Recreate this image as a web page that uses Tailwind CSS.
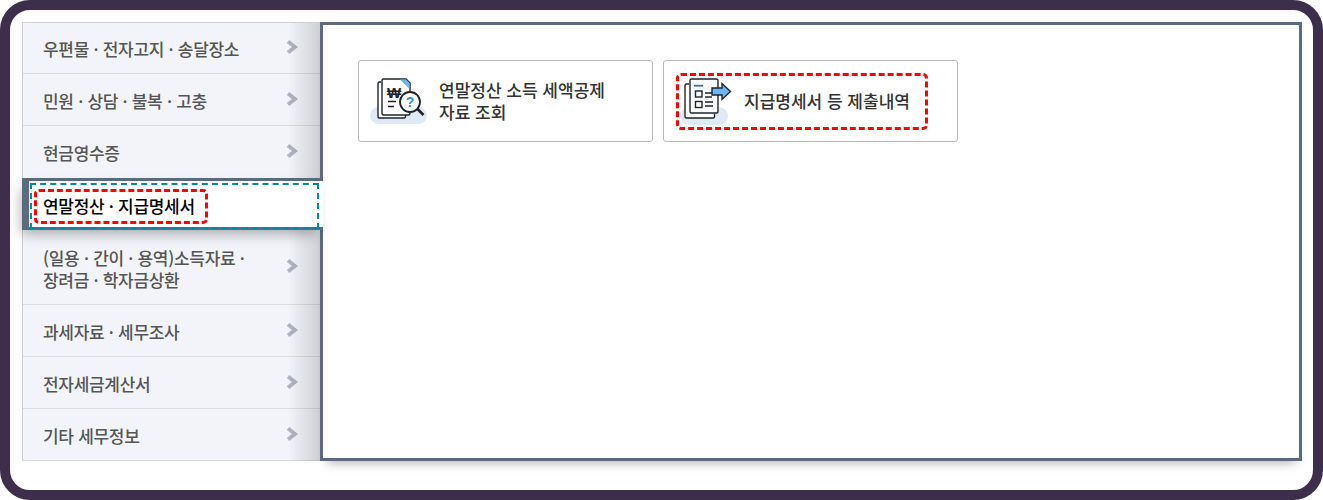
<!DOCTYPE html>
<html lang="ko">
<head>
  <meta charset="UTF-8">
  <title>연말정산 · 지급명세서</title>
  <script src="https://cdn.jsdelivr.net/npm/@tailwindcss/browser@4"></script>
</head>
<body class="bg-white font-['Noto_Sans_CJK_KR','Noto_Sans',sans-serif]">
  <div class="w-[1323px] h-[500px] overflow-hidden bg-white">
    <div class="flex h-full border-[10px] border-[#3d2f4b] rounded-[30px] pt-[12px] pl-[12px]">

      <!-- left menu -->
      <ul class="relative w-[298px] h-[439px] shrink-0 border-t border-l border-[#cfcfcf] bg-[#f3f4f9] text-[17px] leading-[22px] tracking-[-0.3px] text-[#555] font-medium">
        <li class="flex items-center justify-between h-[51px] pl-[20px] pr-[22px] pt-[1px] border-b border-[#dcdcdc]">
          <span>우편물 · 전자고지 · 송달장소</span>
          <svg class="w-[12px] h-[14px] -mt-[3px]" viewBox="0 0 12 14" fill="none" stroke="#aeb2c2" stroke-width="3.8"><polyline points="2,1.5 9,7 2,12.5"/></svg>
        </li>
        <li class="flex items-center justify-between h-[52px] pl-[20px] pr-[22px] pt-[2px] border-b border-[#dcdcdc]">
          <span>민원 · 상담 · 불복 · 고충</span>
          <svg class="w-[12px] h-[14px] -mt-[4px]" viewBox="0 0 12 14" fill="none" stroke="#aeb2c2" stroke-width="3.8"><polyline points="2,1.5 9,7 2,12.5"/></svg>
        </li>
        <li class="flex items-center justify-between h-[52px] pl-[20px] pr-[22px] pt-[2px]">
          <span>현금영수증</span>
          <svg class="w-[12px] h-[14px] -mt-[4px]" viewBox="0 0 12 14" fill="none" stroke="#aeb2c2" stroke-width="3.8"><polyline points="2,1.5 9,7 2,12.5"/></svg>
        </li>

        <!-- active -->
        <li class="relative z-20 -ml-px w-[301px] h-[52px] border-y-[3px] border-l-[7px] border-[#5a6a85] bg-white text-black shadow-[-4px_7px_12px_-3px_rgba(0,0,0,0.3)]">
          <div class="flex items-center w-[289px] h-[46px] mt-[2px] ml-[1px] border-2 border-dashed border-[#008b9b] pl-[2px]">
            <span class="flex items-center w-[174px] h-[35px] pl-[6px] border-[3px] border-dashed border-[#ff0000] rounded-[5px]">연말정산 · 지급명세서</span>
          </div>
        </li>

        <li class="flex items-center justify-between h-[75px] pl-[20px] pr-[22px] pt-[3px] border-b border-[#dcdcdc]">
          <span>(일용 · 간이 · 용역)소득자료 ·<br>장려금 · 학자금상환</span>
          <svg class="w-[12px] h-[14px] -mt-[5px]" viewBox="0 0 12 14" fill="none" stroke="#aeb2c2" stroke-width="3.8"><polyline points="2,1.5 9,7 2,12.5"/></svg>
        </li>
        <li class="flex items-center justify-between h-[52px] pl-[20px] pr-[22px] pt-[3px] border-b border-[#dcdcdc]">
          <span>과세자료 · 세무조사</span>
          <svg class="w-[12px] h-[14px] -mt-[5px]" viewBox="0 0 12 14" fill="none" stroke="#aeb2c2" stroke-width="3.8"><polyline points="2,1.5 9,7 2,12.5"/></svg>
        </li>
        <li class="flex items-center justify-between h-[52px] pl-[20px] pr-[22px] pt-[2px] border-b border-[#dcdcdc]">
          <span>전자세금계산서</span>
          <svg class="w-[12px] h-[14px] -mt-[4px]" viewBox="0 0 12 14" fill="none" stroke="#aeb2c2" stroke-width="3.8"><polyline points="2,1.5 9,7 2,12.5"/></svg>
        </li>
        <li class="flex items-center justify-between h-[52px] pl-[20px] pr-[22px] pt-[2px] border-b border-[#dcdcdc]">
          <span>기타 세무정보</span>
          <svg class="w-[12px] h-[14px] -mt-[4px]" viewBox="0 0 12 14" fill="none" stroke="#aeb2c2" stroke-width="3.8"><polyline points="2,1.5 9,7 2,12.5"/></svg>
        </li>

        <!-- shade along the panel edge -->
        <li class="absolute top-0 bottom-0 right-0 w-[32px] z-10 bg-linear-to-r from-black/0 to-black/15 pointer-events-none"></li>
      </ul>

      <!-- right panel -->
      <main class="relative z-10 flex items-start gap-[10px] w-[982px] h-[439px] border-[3px] border-[#5a6a85] bg-white pt-[35px] pl-[35px] shadow-[0_9px_10px_-7px_rgba(0,0,0,0.3)]">
        <a class="flex items-center w-[295px] h-[82px] border border-[#bbbbbb] rounded-[3px] text-[17px] leading-[22px] text-[#333] font-medium">
          <svg class="ml-[9px] w-[60px] h-[50px] shrink-0" viewBox="0 0 60 50" fill="none" stroke="#1f2329" stroke-width="1.4">
            <rect x="2" y="31" width="57" height="17" rx="8.5" fill="#e2e9f6" stroke="none"/>
            <path d="M13 6h-1.500A1.500 1.500 0 0 0 10 7.500V40.500A1.500 1.500 0 0 0 11.500 42H36a1.500 1.500 0 0 0 1.500-1.500V39" fill="#fff"/>
            <path d="M15.500 3H38l4 4v30.500a1.500 1.500 0 0 1-1.500 1.500h-25a1.500 1.500 0 0 1-1.500-1.500V4.500A1.500 1.500 0 0 1 15.500 3z" fill="#fff"/>
            <path d="M32 3.500h6l3.500 3.500V13z" fill="#6db5f0" stroke="none"/>
            <text x="26" y="21.500" font-family="Liberation Sans" font-size="15" font-weight="700" fill="#1f2329" stroke="none" text-anchor="middle">₩</text>
            <path d="M20 25.500h8M20 30.500h6"/>
            <circle cx="42" cy="26" r="10" fill="#fff" stroke-width="1.800"/>
            <path d="M49.500 33l6 6" stroke-width="2.600"/>
            <text x="42" y="31" font-family="Liberation Sans" font-size="14" font-weight="700" fill="#2f8fdc" stroke="none" text-anchor="middle">?</text>
          </svg>
          <span class="ml-[11px]">연말정산 소득 세액공제<br>자료 조회</span>
        </a>
        <a class="flex items-center w-[295px] h-[82px] border border-[#bbbbbb] rounded-[3px] text-[17px] leading-[22px] text-[#333] font-medium pl-[12px]">
          <div class="flex items-center w-[252px] h-[57px] border-[3px] border-dashed border-[#ff0000] rounded-[5px]">
            <svg class="ml-[1px] w-[56px] h-[50px] shrink-0" viewBox="0 0 56 50" fill="none" stroke="#1f2329" stroke-width="1.4">
              <rect x="0" y="31" width="48" height="18" rx="9" fill="#e2e9f6" stroke="none"/>
              <path d="M9 8H6.500A1.500 1.500 0 0 0 5 9.500V40.500A1.500 1.500 0 0 0 6.500 42H33a1.500 1.500 0 0 0 1.500-1.500V38" fill="#fff"/>
              <rect x="10" y="3" width="28" height="34" rx="1.500" fill="#fff"/>
              <path d="M14 9.700h9" stroke="#1a78c2" stroke-width="1.800"/>
              <rect x="15.500" y="15" width="6.500" height="6"/>
              <rect x="15.500" y="25.500" width="6.500" height="6"/>
              <path d="M25 17h7M25 21h7M25 26h8M25 30h8"/>
              <path d="M32 12h10V7.500l8.500 8-8.500 8V19H32z" fill="#6db5f0"/>
            </svg>
            <span class="ml-[8px]">지급명세서 등 제출내역</span>
          </div>
        </a>
      </main>
    </div>
  </div>
</body>
</html>
